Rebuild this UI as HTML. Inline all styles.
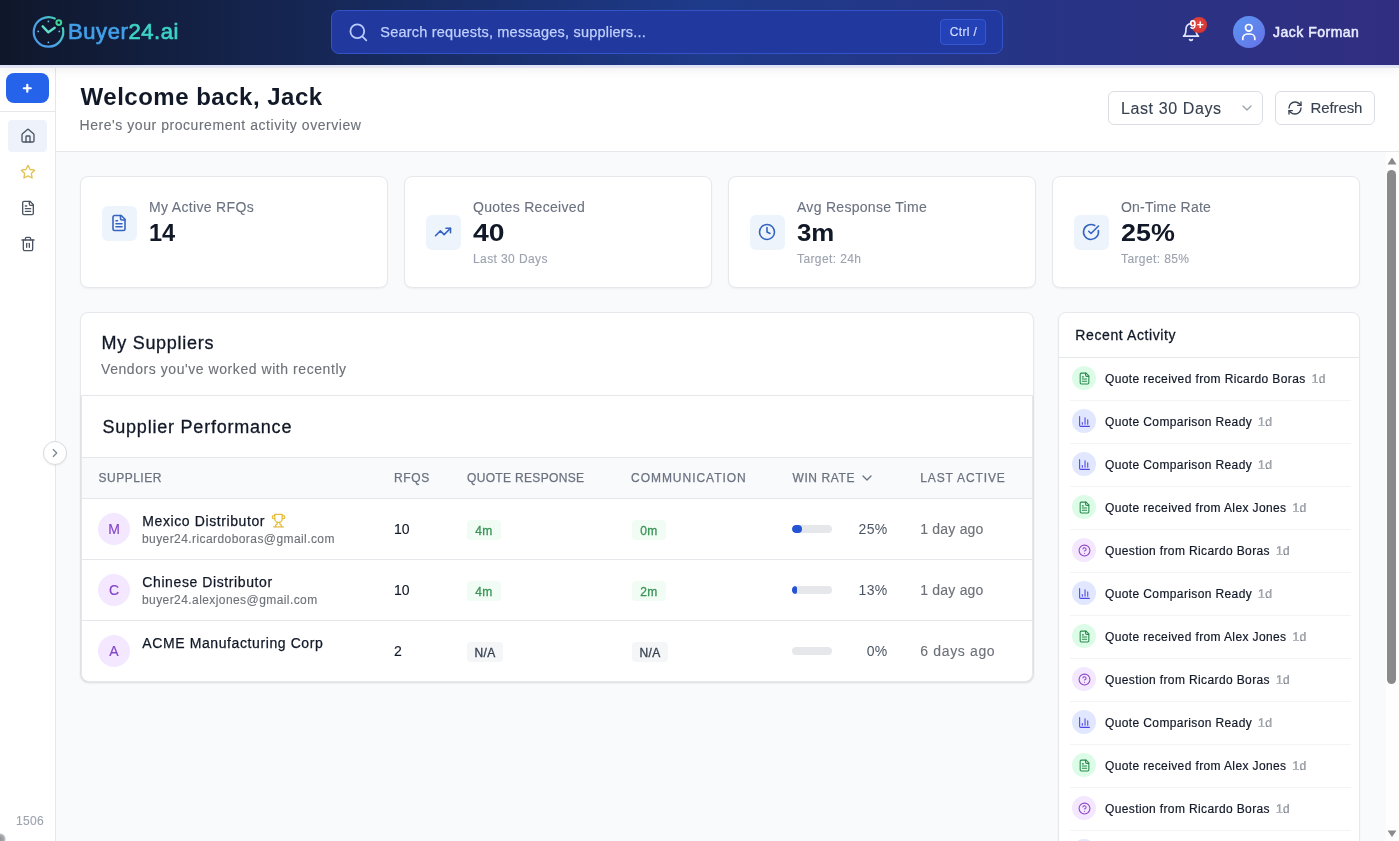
<!DOCTYPE html>
<html><head><meta charset="utf-8">
<style>
*{box-sizing:border-box;margin:0;padding:0}
html,body{width:1399px;height:841px;overflow:hidden;background:#f9fafb;font-family:"Liberation Sans",sans-serif;color:#111827;position:relative}
.a{position:absolute}
.t{position:absolute;white-space:nowrap;line-height:1}
.card{position:absolute;background:#fff;border:1px solid #e6e8eb;border-radius:8px;box-shadow:0 1px 2px rgba(0,0,0,.05)}
svg{position:absolute;overflow:visible}
</style></head><body><div id="root" style="position:absolute;left:0;top:0;width:1399px;height:841px;background:#f9fafb;will-change:transform;overflow:hidden">
<div class="a" style="left:56px;top:65px;width:1343px;height:87px;background:#fff;border-bottom:1px solid #e5e7eb"></div>
<div class="a" style="left:0;top:65px;width:56px;height:776px;background:#fff;border-right:1px solid #e5e7eb"></div>
<div class="a" style="left:0;top:0;width:1399px;height:65px;background:linear-gradient(90deg,#0f172a 0%,#1e3a8a 50%,#312e81 100%);box-shadow:0 2px 0 #dfe3fa,0 3px 0 #e6e7ee,0 6px 10px rgba(40,40,60,.06)"></div>
<svg style="left:33px;top:16px" width="32" height="32" viewBox="0 0 32 32">
<defs><linearGradient id="lg1" x1="0.15" y1="0.85" x2="1" y2="0.25"><stop offset="0" stop-color="#4b9be6"/><stop offset="0.45" stop-color="#4aa6e6"/><stop offset="1" stop-color="#45d8ae"/></linearGradient></defs>
<path d="M21.75 2.49 A14.8 14.8 0 1 0 29.8 12.07" fill="none" stroke="url(#lg1)" stroke-width="2.2" stroke-linecap="round"/>
<circle cx="25.8" cy="6.6" r="2.4" fill="none" stroke="#3fd49a" stroke-width="2"/>
<path d="M9.7 10.3 L15.4 16.3 L21.7 11.7" fill="none" stroke="#62dccb" stroke-width="2.4" stroke-linecap="round" stroke-linejoin="round"/>
<circle cx="15.4" cy="5.4" r="0.9" fill="#6fb7ea"/><circle cx="15.4" cy="26.3" r="0.9" fill="#6fb7ea"/><circle cx="5.2" cy="15.4" r="0.9" fill="#6fb7ea"/><circle cx="26.3" cy="15.4" r="0.9" fill="#6fb7ea"/>
</svg>
<div class="t" style="left:68px;top:20.58px;font-size:22px;font-weight:400;color:#42a0e9;letter-spacing:0.58px;-webkit-text-stroke:0.7px #42a0e9;">Buyer<span style="color:#3dd3c6;-webkit-text-stroke:0.7px #3dd3c6">24.ai</span></div>
<div class="a" style="left:331px;top:10px;width:672px;height:44px;border-radius:8px;background:#21389e;border:1px solid #3353c6"></div>
<svg style="left:347px;top:21px" width="22" height="22" viewBox="0 0 22 22" fill="none" stroke="#b9cbff" stroke-width="1.8" stroke-linecap="round"><circle cx="10.3" cy="10.3" r="6.9"/><path d="M15.8 15.8 L19.3 19.3"/></svg>
<div class="t" style="left:380.3px;top:24.93px;font-size:14.5px;font-weight:400;color:#bfd0ff;letter-spacing:0.2px;-webkit-text-stroke:0.25px #bfd0ff;">Search requests, messages, suppliers...</div>
<div class="a" style="left:940px;top:19px;width:46px;height:26px;border-radius:4px;background:#2342b8;border:1px solid #3557d0"></div>
<div class="t" style="left:949.8px;top:25.84px;font-size:12px;font-weight:400;color:#d6e0ff;letter-spacing:0.35px;-webkit-text-stroke:0.12px #d6e0ff;">Ctrl /</div>
<svg style="left:1181px;top:20.5px" width="20" height="22" viewBox="0 0 24 24" fill="none" stroke="#dfe4ff" stroke-width="2" stroke-linecap="round" stroke-linejoin="round"><path d="M6 8a6 6 0 0 1 12 0c0 7 3 9 3 9H3s3-2 3-9"/><path d="M10.3 21a1.94 1.94 0 0 0 3.4 0"/></svg>
<div class="a" style="left:1191px;top:17.4px;width:15.5px;height:15.5px;border-radius:50%;background:radial-gradient(circle at 45% 40%,#e24a45,#cc2b2b)"></div>
<div class="t" style="left:1189.5px;top:19.24px;font-size:12px;font-weight:700;color:#ffffff;letter-spacing:0.6px;">9+</div>
<div class="a" style="left:1233px;top:16px;width:32px;height:32px;border-radius:50%;background:linear-gradient(135deg,#5b95f2,#6673e6)"></div>
<svg style="left:1239px;top:22px" width="20" height="20" viewBox="0 0 20 20" fill="none" stroke="#fff" stroke-width="1.7" stroke-linecap="round"><circle cx="9.8" cy="5.8" r="3.3"/><path d="M3.8 17.5 v-1.2 a4.3 4.3 0 0 1 4.3 -4.3 h3.4 a4.3 4.3 0 0 1 4.3 4.3 v1.2"/></svg>
<div class="t" style="left:1273px;top:24.95px;font-size:14px;font-weight:400;color:#e8ebff;letter-spacing:0.5px;-webkit-text-stroke:0.5px #e8ebff;">Jack Forman</div>
<div class="a" style="left:6px;top:73px;width:42.5px;height:30px;border-radius:8px;background:#2563eb"></div>
<svg style="left:18px;top:79px" width="18" height="18" viewBox="0 0 18 18" fill="none" stroke="#fff" stroke-width="2.2" stroke-linecap="round"><path d="M9.3 5.8v6.9M5.85 9.25h6.9"/></svg>
<div class="a" style="left:0;top:111px;width:55px;height:1px;background:#e5e7eb"></div>
<div class="a" style="left:8px;top:120px;width:39px;height:32px;border-radius:4px;background:#eef3fb"></div>
<svg style="left:20px;top:128px" width="16" height="16" viewBox="0 0 24 24" fill="none" stroke="#4b5563" stroke-width="2" stroke-linecap="round" stroke-linejoin="round"><path d="M15 21v-8a1 1 0 0 0-1-1h-4a1 1 0 0 0-1 1v8"/><path d="M3 10a2 2 0 0 1 .709-1.528l7-5.999a2 2 0 0 1 2.582 0l7 5.999A2 2 0 0 1 21 10v9a2 2 0 0 1-2 2H5a2 2 0 0 1-2-2z"/></svg>
<svg style="left:20px;top:163.5px" width="16" height="16" viewBox="0 0 24 24" fill="none" stroke="#e2c252" stroke-width="2" stroke-linecap="round" stroke-linejoin="round"><path d="M12 2l3.09 6.26L22 9.27l-5 4.87 1.18 6.88L12 17.77l-6.18 3.25L7 14.14 2 9.27l6.91-1.01L12 2z"/></svg>
<svg style="left:20px;top:200px" width="16" height="16" viewBox="0 0 24 24" fill="none" stroke="#4b5563" stroke-width="2" stroke-linecap="round" stroke-linejoin="round"><path d="M15 2H6a2 2 0 0 0-2 2v16a2 2 0 0 0 2 2h12a2 2 0 0 0 2-2V7Z"/><path d="M14 2v4a2 2 0 0 0 2 2h4"/><path d="M10 9H8"/><path d="M16 13H8"/><path d="M16 17H8"/></svg>
<svg style="left:20px;top:236px" width="16" height="16" viewBox="0 0 24 24" fill="none" stroke="#4b5563" stroke-width="2" stroke-linecap="round" stroke-linejoin="round"><path d="M3 6h18"/><path d="M19 6v14c0 1-1 2-2 2H7c-1 0-2-1-2-2V6"/><path d="M8 6V4c0-1 1-2 2-2h4c1 0 2 1 2 2v2"/><line x1="10" x2="10" y1="11" y2="17"/><line x1="14" x2="14" y1="11" y2="17"/></svg>
<div class="t" style="left:16px;top:814.74px;font-size:12px;font-weight:400;color:#9ca3af;letter-spacing:0.3px;-webkit-text-stroke:0.12px #9ca3af;">1506</div>
<div class="a" style="left:43px;top:441px;width:24px;height:24px;border-radius:50%;background:#fff;border:1px solid #d8dade;box-shadow:0 1px 2px rgba(0,0,0,.06)"></div>
<svg style="left:48px;top:446px" width="14" height="14" viewBox="0 0 24 24" fill="none" stroke="#7d828b" stroke-width="2" stroke-linecap="round" stroke-linejoin="round"><path d="m9 18 6-6-6-6"/></svg>
<div class="t" style="left:80.6px;top:84.98px;font-size:24px;font-weight:700;color:#111827;letter-spacing:0.5px;">Welcome back, Jack</div>
<div class="t" style="left:79.5px;top:117.95px;font-size:14px;font-weight:400;color:#6d7178;letter-spacing:0.55px;-webkit-text-stroke:0.12px #6d7178;">Here's your procurement activity overview</div>
<div class="a" style="left:1108px;top:91px;width:155px;height:34px;border-radius:6px;background:#fff;border:1px solid #dadde2"></div>
<div class="t" style="left:1121px;top:100.56px;font-size:16px;font-weight:400;color:#374151;letter-spacing:0.6px;-webkit-text-stroke:0.12px #374151;">Last 30 Days</div>
<svg style="left:1239px;top:100px" width="16" height="16" viewBox="0 0 24 24" fill="none" stroke="#9ca3af" stroke-width="2" stroke-linecap="round" stroke-linejoin="round"><path d="m6 9 6 6 6-6"/></svg>
<div class="a" style="left:1275px;top:91px;width:100px;height:34px;border-radius:6px;background:#fff;border:1px solid #dadde2"></div>
<svg style="left:1287px;top:100px" width="16" height="16" viewBox="0 0 24 24" fill="none" stroke="#374151" stroke-width="2" stroke-linecap="round" stroke-linejoin="round"><path d="M3 12a9 9 0 0 1 9-9 9.75 9.75 0 0 1 6.74 2.74L21 8"/><path d="M21 3v5h-5"/><path d="M21 12a9 9 0 0 1-9 9 9.75 9.75 0 0 1-6.74-2.74L3 16"/><path d="M8 16H3v5"/></svg>
<div class="t" style="left:1310.5px;top:100.40px;font-size:15px;font-weight:400;color:#374151;letter-spacing:-0.1px;-webkit-text-stroke:0.12px #374151;">Refresh</div>
<div class="card" style="left:80px;top:176px;width:308px;height:112px"></div>
<div class="a" style="left:101.5px;top:205.7px;width:35px;height:35px;border-radius:6px;background:#eef4fc"></div>
<svg style="left:110px;top:214px" width="18" height="18" viewBox="0 0 24 24" fill="none" stroke="#3463c0" stroke-width="2.1" stroke-linecap="round" stroke-linejoin="round"><path d="M15 2H6a2 2 0 0 0-2 2v16a2 2 0 0 0 2 2h12a2 2 0 0 0 2-2V7Z"/><path d="M14 2v4a2 2 0 0 0 2 2h4"/><path d="M10 9H8"/><path d="M16 13H8"/><path d="M16 17H8"/></svg>
<div class="t" style="left:149px;top:200.05px;font-size:14px;font-weight:400;color:#6b7280;letter-spacing:0.33px;-webkit-text-stroke:0.12px #6b7280;">My Active RFQs</div>
<div class="t" style="left:149px;top:220.58px;font-size:24px;font-weight:700;color:#111827;letter-spacing:0px;transform-origin:0 0;transform:scaleX(0.98);">14</div>
<div class="card" style="left:404px;top:176px;width:308px;height:112px"></div>
<div class="a" style="left:425.5px;top:214.7px;width:35px;height:35px;border-radius:6px;background:#eef4fc"></div>
<svg style="left:434px;top:223px" width="18" height="18" viewBox="0 0 24 24" fill="none" stroke="#3463c0" stroke-width="2.1" stroke-linecap="round" stroke-linejoin="round"><polyline points="22 7 13.5 15.5 8.5 10.5 2 17"/><polyline points="16 7 22 7 22 13"/></svg>
<div class="t" style="left:473px;top:200.05px;font-size:14px;font-weight:400;color:#6b7280;letter-spacing:0.31px;-webkit-text-stroke:0.12px #6b7280;">Quotes Received</div>
<div class="t" style="left:473px;top:220.58px;font-size:24px;font-weight:700;color:#111827;letter-spacing:0px;transform-origin:0 0;transform:scaleX(1.18);">40</div>
<div class="t" style="left:473px;top:252.54px;font-size:12px;font-weight:400;color:#9ca3af;letter-spacing:0.4px;-webkit-text-stroke:0.12px #9ca3af;">Last 30 Days</div>
<div class="card" style="left:728px;top:176px;width:308px;height:112px"></div>
<div class="a" style="left:749.5px;top:214.7px;width:35px;height:35px;border-radius:6px;background:#eef4fc"></div>
<svg style="left:758px;top:223px" width="18" height="18" viewBox="0 0 24 24" fill="none" stroke="#3463c0" stroke-width="2.1" stroke-linecap="round" stroke-linejoin="round"><circle cx="12" cy="12" r="10"/><polyline points="12 6 12 12 16 14"/></svg>
<div class="t" style="left:797px;top:200.05px;font-size:14px;font-weight:400;color:#6b7280;letter-spacing:0.29px;-webkit-text-stroke:0.12px #6b7280;">Avg Response Time</div>
<div class="t" style="left:797px;top:220.58px;font-size:24px;font-weight:700;color:#111827;letter-spacing:0px;transform-origin:0 0;transform:scaleX(1.076);">3m</div>
<div class="t" style="left:797px;top:252.54px;font-size:12px;font-weight:400;color:#9ca3af;letter-spacing:0.4px;-webkit-text-stroke:0.12px #9ca3af;">Target: 24h</div>
<div class="card" style="left:1052px;top:176px;width:308px;height:112px"></div>
<div class="a" style="left:1073.5px;top:214.7px;width:35px;height:35px;border-radius:6px;background:#eef4fc"></div>
<svg style="left:1082px;top:223px" width="18" height="18" viewBox="0 0 24 24" fill="none" stroke="#3463c0" stroke-width="2.1" stroke-linecap="round" stroke-linejoin="round"><path d="M21.801 10A10 10 0 1 1 17 3.335"/><path d="m9 11 3 3L22 4"/></svg>
<div class="t" style="left:1121px;top:200.05px;font-size:14px;font-weight:400;color:#6b7280;letter-spacing:0.22px;-webkit-text-stroke:0.12px #6b7280;">On-Time Rate</div>
<div class="t" style="left:1121px;top:220.58px;font-size:24px;font-weight:700;color:#111827;letter-spacing:0px;transform-origin:0 0;transform:scaleX(1.12);">25%</div>
<div class="t" style="left:1121px;top:252.54px;font-size:12px;font-weight:400;color:#9ca3af;letter-spacing:0.4px;-webkit-text-stroke:0.12px #9ca3af;">Target: 85%</div>
<div class="card" style="left:80px;top:312px;width:954px;height:370px"></div>
<div class="t" style="left:101.5px;top:333.56px;font-size:18px;font-weight:400;color:#111827;letter-spacing:0.72px;-webkit-text-stroke:0.3px #111827;">My Suppliers</div>
<div class="t" style="left:101px;top:362.15px;font-size:14px;font-weight:400;color:#6d7178;letter-spacing:0.56px;-webkit-text-stroke:0.12px #6d7178;">Vendors you've worked with recently</div>
<div class="a" style="left:81px;top:395px;width:952px;height:287px;background:#fff;border:1px solid #e5e7eb;border-radius:0 0 8px 8px;box-shadow:0 1px 3px rgba(0,0,0,.08)"></div>
<div class="t" style="left:102.5px;top:417.76px;font-size:18px;font-weight:400;color:#111827;letter-spacing:0.78px;-webkit-text-stroke:0.3px #111827;">Supplier Performance</div>
<div class="a" style="left:82px;top:457px;width:950px;height:42px;background:#f9fafb;border-top:1px solid #e5e7eb;border-bottom:1px solid #e5e7eb"></div>
<div class="t" style="left:98.5px;top:472.04px;font-size:12px;font-weight:400;color:#6b7280;letter-spacing:0.5px;-webkit-text-stroke:0.25px #6b7280;">SUPPLIER</div>
<div class="t" style="left:394px;top:472.04px;font-size:12px;font-weight:400;color:#6b7280;letter-spacing:0.6px;-webkit-text-stroke:0.25px #6b7280;">RFQS</div>
<div class="t" style="left:467px;top:472.04px;font-size:12px;font-weight:400;color:#6b7280;letter-spacing:0.33px;-webkit-text-stroke:0.25px #6b7280;">QUOTE RESPONSE</div>
<div class="t" style="left:631px;top:472.04px;font-size:12px;font-weight:400;color:#6b7280;letter-spacing:0.97px;-webkit-text-stroke:0.25px #6b7280;">COMMUNICATION</div>
<div class="t" style="left:792.5px;top:472.04px;font-size:12px;font-weight:400;color:#6b7280;letter-spacing:0.6px;-webkit-text-stroke:0.25px #6b7280;">WIN RATE</div>
<div class="t" style="left:920.3px;top:472.04px;font-size:12px;font-weight:400;color:#6b7280;letter-spacing:0.87px;-webkit-text-stroke:0.25px #6b7280;">LAST ACTIVE</div>
<svg style="left:859px;top:470px" width="16" height="16" viewBox="0 0 24 24" fill="none" stroke="#6b7280" stroke-width="2" stroke-linecap="round" stroke-linejoin="round"><path d="m6 9 6 6 6-6"/></svg>
<div class="a" style="left:82px;top:559px;width:950px;height:1px;background:#e5e7eb"></div>
<div class="a" style="left:98px;top:513px;width:32px;height:32px;border-radius:50%;background:#f3e8ff"></div>
<div class="t" style="left:98px;width:32px;text-align:center;top:522.25px;font-size:14px;color:#8445c8;-webkit-text-stroke:0.15px #8445c8">M</div>
<div class="t" style="left:142.3px;top:514.15px;font-size:14px;font-weight:400;color:#111827;letter-spacing:0.6px;-webkit-text-stroke:0.25px #111827;">Mexico Distributor</div>
<div class="t" style="left:142px;top:532.64px;font-size:12px;font-weight:400;color:#6d7178;letter-spacing:0.42px;-webkit-text-stroke:0.12px #6d7178;">buyer24.ricardoboras@gmail.com</div>
<div class="t" style="left:394px;top:522.45px;font-size:14px;font-weight:400;color:#111827;letter-spacing:0px;-webkit-text-stroke:0.12px #111827;">10</div>
<div class="a" style="left:467px;top:520px;width:34px;height:20px;border-radius:4px;background:#f1fcf4"></div>
<div class="t" style="left:467px;width:34px;text-align:center;top:524.64px;font-size:12px;color:#399457;letter-spacing:0.3px;-webkit-text-stroke:0.3px #399457">4m</div>
<div class="a" style="left:632px;top:520px;width:34px;height:20px;border-radius:4px;background:#f1fcf4"></div>
<div class="t" style="left:632px;width:34px;text-align:center;top:524.64px;font-size:12px;color:#399457;letter-spacing:0.3px;-webkit-text-stroke:0.3px #399457">0m</div>
<div class="a" style="left:792px;top:525px;width:40px;height:8px;border-radius:4px;background:#e5e7eb;overflow:hidden"><div style="width:10.0px;height:8px;border-radius:4px;background:#2453d4"></div></div>
<div class="t" style="left:830px;width:57.5px;text-align:right;top:522.45px;font-size:14px;color:#4b5563;letter-spacing:0.3px">25%</div>
<div class="t" style="left:920.3px;top:522.45px;font-size:14px;font-weight:400;color:#6d7178;letter-spacing:0.2px;-webkit-text-stroke:0.12px #6d7178;">1 day ago</div>
<svg style="left:271px;top:513px" width="15" height="15" viewBox="0 0 24 24" fill="none" stroke="#e6bd3a" stroke-width="2" stroke-linecap="round" stroke-linejoin="round"><path d="M6 9H4.5a2.5 2.5 0 0 1 0-5H6"/><path d="M18 9h1.5a2.5 2.5 0 0 0 0-5H18"/><path d="M4 22h16"/><path d="M10 14.66V17c0 .55-.47.98-.97 1.21C7.85 18.75 7 20.24 7 22"/><path d="M14 14.66V17c0 .55.47.98.97 1.21C16.15 18.75 17 20.24 17 22"/><path d="M18 2H6v7a6 6 0 0 0 12 0V2Z"/></svg>
<div class="a" style="left:82px;top:620px;width:950px;height:1px;background:#e5e7eb"></div>
<div class="a" style="left:98px;top:574px;width:32px;height:32px;border-radius:50%;background:#f3e8ff"></div>
<div class="t" style="left:98px;width:32px;text-align:center;top:583.25px;font-size:14px;color:#8445c8;-webkit-text-stroke:0.15px #8445c8">C</div>
<div class="t" style="left:142.3px;top:575.15px;font-size:14px;font-weight:400;color:#111827;letter-spacing:0.6px;-webkit-text-stroke:0.25px #111827;">Chinese Distributor</div>
<div class="t" style="left:142px;top:593.64px;font-size:12px;font-weight:400;color:#6d7178;letter-spacing:0.42px;-webkit-text-stroke:0.12px #6d7178;">buyer24.alexjones@gmail.com</div>
<div class="t" style="left:394px;top:583.45px;font-size:14px;font-weight:400;color:#111827;letter-spacing:0px;-webkit-text-stroke:0.12px #111827;">10</div>
<div class="a" style="left:467px;top:581px;width:34px;height:20px;border-radius:4px;background:#f1fcf4"></div>
<div class="t" style="left:467px;width:34px;text-align:center;top:585.64px;font-size:12px;color:#399457;letter-spacing:0.3px;-webkit-text-stroke:0.3px #399457">4m</div>
<div class="a" style="left:632px;top:581px;width:34px;height:20px;border-radius:4px;background:#f1fcf4"></div>
<div class="t" style="left:632px;width:34px;text-align:center;top:585.64px;font-size:12px;color:#399457;letter-spacing:0.3px;-webkit-text-stroke:0.3px #399457">2m</div>
<div class="a" style="left:792px;top:586px;width:40px;height:8px;border-radius:4px;background:#e5e7eb;overflow:hidden"><div style="width:5.2px;height:8px;border-radius:4px;background:#2453d4"></div></div>
<div class="t" style="left:830px;width:57.5px;text-align:right;top:583.45px;font-size:14px;color:#4b5563;letter-spacing:0.3px">13%</div>
<div class="t" style="left:920.3px;top:583.45px;font-size:14px;font-weight:400;color:#6d7178;letter-spacing:0.2px;-webkit-text-stroke:0.12px #6d7178;">1 day ago</div>
<div class="a" style="left:98px;top:635px;width:32px;height:32px;border-radius:50%;background:#f3e8ff"></div>
<div class="t" style="left:98px;width:32px;text-align:center;top:644.25px;font-size:14px;color:#8445c8;-webkit-text-stroke:0.15px #8445c8">A</div>
<div class="t" style="left:142.3px;top:636.15px;font-size:14px;font-weight:400;color:#111827;letter-spacing:0.6px;-webkit-text-stroke:0.25px #111827;">ACME Manufacturing Corp</div>
<div class="t" style="left:394px;top:644.45px;font-size:14px;font-weight:400;color:#111827;letter-spacing:0px;-webkit-text-stroke:0.12px #111827;">2</div>
<div class="a" style="left:467px;top:642px;width:36px;height:20px;border-radius:4px;background:#f5f6f7"></div>
<div class="t" style="left:467px;width:36px;text-align:center;top:646.64px;font-size:12px;color:#374151;letter-spacing:0.3px;-webkit-text-stroke:0.3px #374151">N/A</div>
<div class="a" style="left:632px;top:642px;width:36px;height:20px;border-radius:4px;background:#f5f6f7"></div>
<div class="t" style="left:632px;width:36px;text-align:center;top:646.64px;font-size:12px;color:#374151;letter-spacing:0.3px;-webkit-text-stroke:0.3px #374151">N/A</div>
<div class="a" style="left:792px;top:647px;width:40px;height:8px;border-radius:4px;background:#e5e7eb;overflow:hidden"><div style="width:0.0px;height:8px;border-radius:4px;background:#2453d4"></div></div>
<div class="t" style="left:830px;width:57.5px;text-align:right;top:644.45px;font-size:14px;color:#4b5563;letter-spacing:0.3px">0%</div>
<div class="t" style="left:920.3px;top:644.45px;font-size:14px;font-weight:400;color:#6d7178;letter-spacing:0.65px;-webkit-text-stroke:0.12px #6d7178;">6 days ago</div>
<div class="card" style="left:1058px;top:312px;width:302px;height:560px"></div>
<div class="t" style="left:1075.3px;top:327.85px;font-size:14px;font-weight:400;color:#111827;letter-spacing:0.6px;-webkit-text-stroke:0.28px #111827;">Recent Activity</div>
<div class="a" style="left:1059px;top:357px;width:300px;height:1px;background:#e5e7eb"></div>
<div class="a" style="left:1072px;top:366.3px;width:24px;height:24px;border-radius:50%;background:#dcfce7"></div>
<svg style="left:1077.5px;top:371.8px" width="13" height="13" viewBox="0 0 24 24" fill="none" stroke="#2a8a4e" stroke-width="2" stroke-linecap="round" stroke-linejoin="round"><path d="M15 2H6a2 2 0 0 0-2 2v16a2 2 0 0 0 2 2h12a2 2 0 0 0 2-2V7Z"/><path d="M14 2v4a2 2 0 0 0 2 2h4"/><path d="M10 9H8"/><path d="M16 13H8"/><path d="M16 17H8"/></svg>
<div class="t" style="left:1105px;top:372.64px;font-size:12px;font-weight:400;color:#111827;letter-spacing:0.38px;-webkit-text-stroke:0.18px #111827;">Quote received from Ricardo Boras<span style="color:#b2b6bd;margin-left:6px">1d</span></div>
<div class="a" style="left:1069.5px;top:400.3px;width:281.5px;height:1px;background:#f3f4f6"></div>
<div class="a" style="left:1072px;top:409.3px;width:24px;height:24px;border-radius:50%;background:#e0e7ff"></div>
<svg style="left:1077.5px;top:414.8px" width="13" height="13" viewBox="0 0 24 24" fill="none" stroke="#4f46e5" stroke-width="2" stroke-linecap="round" stroke-linejoin="round"><path d="M3 3v16a2 2 0 0 0 2 2h16"/><path d="M18 17V9"/><path d="M13 17V5"/><path d="M8 17v-3"/></svg>
<div class="t" style="left:1105px;top:415.64px;font-size:12px;font-weight:400;color:#111827;letter-spacing:0.38px;-webkit-text-stroke:0.18px #111827;">Quote Comparison Ready<span style="color:#b2b6bd;margin-left:6px">1d</span></div>
<div class="a" style="left:1069.5px;top:443.3px;width:281.5px;height:1px;background:#f3f4f6"></div>
<div class="a" style="left:1072px;top:452.3px;width:24px;height:24px;border-radius:50%;background:#e0e7ff"></div>
<svg style="left:1077.5px;top:457.8px" width="13" height="13" viewBox="0 0 24 24" fill="none" stroke="#4f46e5" stroke-width="2" stroke-linecap="round" stroke-linejoin="round"><path d="M3 3v16a2 2 0 0 0 2 2h16"/><path d="M18 17V9"/><path d="M13 17V5"/><path d="M8 17v-3"/></svg>
<div class="t" style="left:1105px;top:458.64px;font-size:12px;font-weight:400;color:#111827;letter-spacing:0.38px;-webkit-text-stroke:0.18px #111827;">Quote Comparison Ready<span style="color:#b2b6bd;margin-left:6px">1d</span></div>
<div class="a" style="left:1069.5px;top:486.3px;width:281.5px;height:1px;background:#f3f4f6"></div>
<div class="a" style="left:1072px;top:495.3px;width:24px;height:24px;border-radius:50%;background:#dcfce7"></div>
<svg style="left:1077.5px;top:500.8px" width="13" height="13" viewBox="0 0 24 24" fill="none" stroke="#2a8a4e" stroke-width="2" stroke-linecap="round" stroke-linejoin="round"><path d="M15 2H6a2 2 0 0 0-2 2v16a2 2 0 0 0 2 2h12a2 2 0 0 0 2-2V7Z"/><path d="M14 2v4a2 2 0 0 0 2 2h4"/><path d="M10 9H8"/><path d="M16 13H8"/><path d="M16 17H8"/></svg>
<div class="t" style="left:1105px;top:501.64px;font-size:12px;font-weight:400;color:#111827;letter-spacing:0.38px;-webkit-text-stroke:0.18px #111827;">Quote received from Alex Jones<span style="color:#b2b6bd;margin-left:6px">1d</span></div>
<div class="a" style="left:1069.5px;top:529.3px;width:281.5px;height:1px;background:#f3f4f6"></div>
<div class="a" style="left:1072px;top:538.3px;width:24px;height:24px;border-radius:50%;background:#f3e8ff"></div>
<svg style="left:1077.5px;top:543.8px" width="13" height="13" viewBox="0 0 24 24" fill="none" stroke="#9045c8" stroke-width="2" stroke-linecap="round" stroke-linejoin="round"><circle cx="12" cy="12" r="10"/><path d="M9.09 9a3 3 0 0 1 5.83 1c0 2-3 3-3 3"/><path d="M12 17h.01"/></svg>
<div class="t" style="left:1105px;top:544.64px;font-size:12px;font-weight:400;color:#111827;letter-spacing:0.38px;-webkit-text-stroke:0.18px #111827;">Question from Ricardo Boras<span style="color:#b2b6bd;margin-left:6px">1d</span></div>
<div class="a" style="left:1069.5px;top:572.3px;width:281.5px;height:1px;background:#f3f4f6"></div>
<div class="a" style="left:1072px;top:581.3px;width:24px;height:24px;border-radius:50%;background:#e0e7ff"></div>
<svg style="left:1077.5px;top:586.8px" width="13" height="13" viewBox="0 0 24 24" fill="none" stroke="#4f46e5" stroke-width="2" stroke-linecap="round" stroke-linejoin="round"><path d="M3 3v16a2 2 0 0 0 2 2h16"/><path d="M18 17V9"/><path d="M13 17V5"/><path d="M8 17v-3"/></svg>
<div class="t" style="left:1105px;top:587.64px;font-size:12px;font-weight:400;color:#111827;letter-spacing:0.38px;-webkit-text-stroke:0.18px #111827;">Quote Comparison Ready<span style="color:#b2b6bd;margin-left:6px">1d</span></div>
<div class="a" style="left:1069.5px;top:615.3px;width:281.5px;height:1px;background:#f3f4f6"></div>
<div class="a" style="left:1072px;top:624.3px;width:24px;height:24px;border-radius:50%;background:#dcfce7"></div>
<svg style="left:1077.5px;top:629.8px" width="13" height="13" viewBox="0 0 24 24" fill="none" stroke="#2a8a4e" stroke-width="2" stroke-linecap="round" stroke-linejoin="round"><path d="M15 2H6a2 2 0 0 0-2 2v16a2 2 0 0 0 2 2h12a2 2 0 0 0 2-2V7Z"/><path d="M14 2v4a2 2 0 0 0 2 2h4"/><path d="M10 9H8"/><path d="M16 13H8"/><path d="M16 17H8"/></svg>
<div class="t" style="left:1105px;top:630.64px;font-size:12px;font-weight:400;color:#111827;letter-spacing:0.38px;-webkit-text-stroke:0.18px #111827;">Quote received from Alex Jones<span style="color:#b2b6bd;margin-left:6px">1d</span></div>
<div class="a" style="left:1069.5px;top:658.3px;width:281.5px;height:1px;background:#f3f4f6"></div>
<div class="a" style="left:1072px;top:667.3px;width:24px;height:24px;border-radius:50%;background:#f3e8ff"></div>
<svg style="left:1077.5px;top:672.8px" width="13" height="13" viewBox="0 0 24 24" fill="none" stroke="#9045c8" stroke-width="2" stroke-linecap="round" stroke-linejoin="round"><circle cx="12" cy="12" r="10"/><path d="M9.09 9a3 3 0 0 1 5.83 1c0 2-3 3-3 3"/><path d="M12 17h.01"/></svg>
<div class="t" style="left:1105px;top:673.64px;font-size:12px;font-weight:400;color:#111827;letter-spacing:0.38px;-webkit-text-stroke:0.18px #111827;">Question from Ricardo Boras<span style="color:#b2b6bd;margin-left:6px">1d</span></div>
<div class="a" style="left:1069.5px;top:701.3px;width:281.5px;height:1px;background:#f3f4f6"></div>
<div class="a" style="left:1072px;top:710.3px;width:24px;height:24px;border-radius:50%;background:#e0e7ff"></div>
<svg style="left:1077.5px;top:715.8px" width="13" height="13" viewBox="0 0 24 24" fill="none" stroke="#4f46e5" stroke-width="2" stroke-linecap="round" stroke-linejoin="round"><path d="M3 3v16a2 2 0 0 0 2 2h16"/><path d="M18 17V9"/><path d="M13 17V5"/><path d="M8 17v-3"/></svg>
<div class="t" style="left:1105px;top:716.64px;font-size:12px;font-weight:400;color:#111827;letter-spacing:0.38px;-webkit-text-stroke:0.18px #111827;">Quote Comparison Ready<span style="color:#b2b6bd;margin-left:6px">1d</span></div>
<div class="a" style="left:1069.5px;top:744.3px;width:281.5px;height:1px;background:#f3f4f6"></div>
<div class="a" style="left:1072px;top:753.3px;width:24px;height:24px;border-radius:50%;background:#dcfce7"></div>
<svg style="left:1077.5px;top:758.8px" width="13" height="13" viewBox="0 0 24 24" fill="none" stroke="#2a8a4e" stroke-width="2" stroke-linecap="round" stroke-linejoin="round"><path d="M15 2H6a2 2 0 0 0-2 2v16a2 2 0 0 0 2 2h12a2 2 0 0 0 2-2V7Z"/><path d="M14 2v4a2 2 0 0 0 2 2h4"/><path d="M10 9H8"/><path d="M16 13H8"/><path d="M16 17H8"/></svg>
<div class="t" style="left:1105px;top:759.64px;font-size:12px;font-weight:400;color:#111827;letter-spacing:0.38px;-webkit-text-stroke:0.18px #111827;">Quote received from Alex Jones<span style="color:#b2b6bd;margin-left:6px">1d</span></div>
<div class="a" style="left:1069.5px;top:787.3px;width:281.5px;height:1px;background:#f3f4f6"></div>
<div class="a" style="left:1072px;top:796.3px;width:24px;height:24px;border-radius:50%;background:#f3e8ff"></div>
<svg style="left:1077.5px;top:801.8px" width="13" height="13" viewBox="0 0 24 24" fill="none" stroke="#9045c8" stroke-width="2" stroke-linecap="round" stroke-linejoin="round"><circle cx="12" cy="12" r="10"/><path d="M9.09 9a3 3 0 0 1 5.83 1c0 2-3 3-3 3"/><path d="M12 17h.01"/></svg>
<div class="t" style="left:1105px;top:802.64px;font-size:12px;font-weight:400;color:#111827;letter-spacing:0.38px;-webkit-text-stroke:0.18px #111827;">Question from Ricardo Boras<span style="color:#b2b6bd;margin-left:6px">1d</span></div>
<div class="a" style="left:1069.5px;top:830.3px;width:281.5px;height:1px;background:#f3f4f6"></div>
<div class="a" style="left:1072px;top:839.3px;width:24px;height:24px;border-radius:50%;background:#e0e7ff"></div>
<svg style="left:1077.5px;top:844.8px" width="13" height="13" viewBox="0 0 24 24" fill="none" stroke="#4f46e5" stroke-width="2" stroke-linecap="round" stroke-linejoin="round"><path d="M3 3v16a2 2 0 0 0 2 2h16"/><path d="M18 17V9"/><path d="M13 17V5"/><path d="M8 17v-3"/></svg>
<div class="t" style="left:1105px;top:845.64px;font-size:12px;font-weight:400;color:#111827;letter-spacing:0.38px;-webkit-text-stroke:0.18px #111827;">Quote Comparison Ready<span style="color:#b2b6bd;margin-left:6px">1d</span></div>
<div class="a" style="left:1069.5px;top:873.3px;width:281.5px;height:1px;background:#f3f4f6"></div>
<div class="a" style="left:1386px;top:152px;width:13px;height:689px;background:#fefefe"></div>
<svg style="left:1386.5px;top:156.5px" width="10" height="8" viewBox="0 0 10 8"><path d="M5 0.5 L9.5 7.5 L0.5 7.5 Z" fill="#8a8a8a"/></svg>
<div class="a" style="left:1387px;top:170px;width:9px;height:514px;border-radius:4.5px;background:#8a8a8a"></div>
<svg style="left:1386.5px;top:829.5px" width="10" height="8" viewBox="0 0 10 8"><path d="M0.5 0.5 L9.5 0.5 L5 7 Z" fill="#8a8a8a"/></svg>
<div class="a" style="left:-6px;top:833px;width:12px;height:12px;border-radius:50%;background:radial-gradient(circle,#8d9296 0,#a9adb0 50%,rgba(255,255,255,0) 75%)"></div>
</div></body></html>
